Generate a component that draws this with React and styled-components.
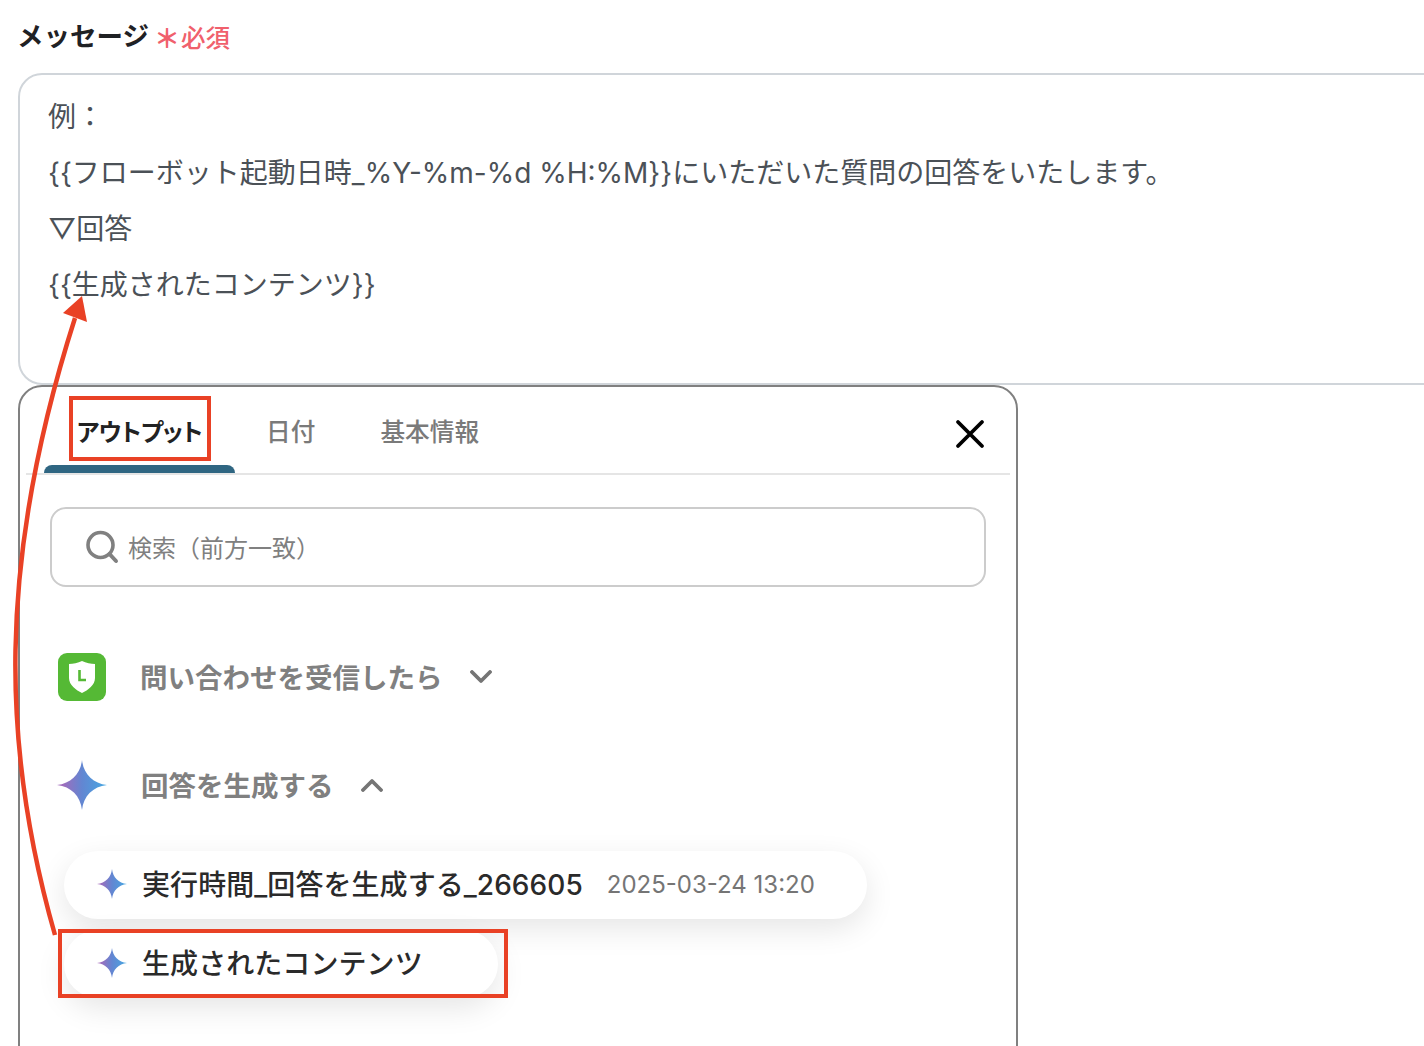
import styled, { createGlobalStyle } from "styled-components";
import { useId } from "react";

const GlobalStyle = createGlobalStyle`
  html, body {
    margin: 0;
    background: #fff;
    overflow: hidden;
  }
  * {
    box-sizing: border-box;
  }
`;

function Sparkle({ size }) {
  const id = useId();
  return (
    <svg width={size} height={size} viewBox="0 0 50 50">
      <defs>
        <linearGradient id={id} x1="0" y1="0" x2="1" y2="0">
          <stop offset="0.1" stopColor="#a26cbb" />
          <stop offset="0.5" stopColor="#6286d2" />
          <stop offset="1" stopColor="#46a8e2" />
        </linearGradient>
      </defs>
      <path
        d="M25 0C26.5 14 36 23.5 50 25C36 26.5 26.5 36 25 50C23.5 36 14 26.5 0 25C14 23.5 23.5 14 25 0Z"
        fill={`url(#${id})`}
      />
    </svg>
  );
}

function LineIcon() {
  return (
    <LineBadge>
      <svg width="28" height="34" viewBox="0 0 28 34">
        <path
          d="M14 1C18 3 23 4 27 4V18C27 25 20 30 14 33C8 30 1 25 1 18V4C5 4 10 3 14 1Z"
          fill="#fff"
        />
        <path d="M11.5 10V20H18" fill="none" stroke="#55b935" strokeWidth="2.6" />
      </svg>
    </LineBadge>
  );
}

function Chevron({ up }) {
  return (
    <ChevronIcon width="22" height="14" viewBox="0 0 22 14">
      <path
        d={up ? "M2 12L11 3L20 12" : "M2 2L11 11L20 2"}
        fill="none"
        stroke="#757575"
        strokeWidth="3.8"
        strokeLinecap="round"
        strokeLinejoin="round"
      />
    </ChevronIcon>
  );
}

export default function App() {
  return (
    <Page>
      <GlobalStyle />
      <LabelRow>
        <Label>メッセージ</Label>
        <Required>
          <RequiredStar>＊</RequiredStar>必須
        </Required>
      </LabelRow>
      <MessageBox>
        <MessageLine>例：</MessageLine>
        <MessageLine>
          {"{{フローボット起動日時_%Y-%m-%d %H:%M}}にいただいた質問の回答をいたします。"}
        </MessageLine>
        <MessageLine>▽回答</MessageLine>
        <MessageLine>{"{{生成されたコンテンツ}}"}</MessageLine>
      </MessageBox>
      <Panel>
        <TabBar>
          <ActiveTab>
            アウトプット
            <TabHighlight />
          </ActiveTab>
          <Tab $left={31}>日付</Tab>
          <Tab $left={65}>基本情報</Tab>
          <CloseButton>
            <svg width="30" height="30" viewBox="0 0 30 30">
              <path
                d="M3 3L27 27M27 3L3 27"
                stroke="#000"
                strokeWidth="3.8"
                strokeLinecap="round"
              />
            </svg>
          </CloseButton>
        </TabBar>
        <SearchBox>
          <svg width="34" height="34" viewBox="0 0 34 34">
            <circle cx="15.5" cy="15" r="12.5" fill="none" stroke="#808080" strokeWidth="3.6" />
            <path d="M24.5 24L31 31" stroke="#808080" strokeWidth="4" strokeLinecap="round" />
          </svg>
          <SearchPlaceholder>検索（前方一致）</SearchPlaceholder>
        </SearchBox>
        <SourceRow>
          <LineIcon />
          <SourceTitle>問い合わせを受信したら</SourceTitle>
          <Chevron />
        </SourceRow>
        <SourceRow $second>
          <Sparkle size={50} />
          <SourceTitle>回答を生成する</SourceTitle>
          <Chevron up />
        </SourceRow>
        <PillList>
          <Pill $w={803}>
            <Sparkle size={30} />
            <PillText>実行時間_回答を生成する_266605</PillText>
            <PillDate>2025-03-24 13:20</PillDate>
          </Pill>
          <Pill $w={434}>
            <Sparkle size={30} />
            <PillText>生成されたコンテンツ</PillText>
            <PillHighlight />
          </Pill>
        </PillList>
      </Panel>
      <ArrowOverlay viewBox="0 0 200 1046" width="200" height="1046">
        <path d="M55 935C2 750 -4 565 75 318" fill="none" stroke="#e94125" strokeWidth="4.5" />
        <path d="M82 296L63 313L87 322Z" fill="#e94125" />
      </ArrowOverlay>
    </Page>
  );
}

const Page = styled.div`
  position: relative;
  width: 1424px;
  height: 1046px;
  overflow: hidden;
  padding: 16px 0 0 18px;
  font-family: "Inter", "Noto Sans CJK JP", sans-serif;
`;

const LabelRow = styled.div`
  display: flex;
  align-items: center;
  gap: 9px;
  height: 40px;
  margin-bottom: 17px;
`;

const Label = styled.span`
  position: relative;
  top: -2px;
  margin-left: -1px;
  font-size: 26.5px;
  font-weight: 700;
  color: #1f2124;
`;

const Required = styled.span`
  display: flex;
  align-items: center;
  font-size: 24.5px;
  font-weight: 500;
  color: #f0606c;
`;

const RequiredStar = styled.span`
  position: relative;
  top: 3px;
  width: 27px;
  margin-left: -4px;
  font-size: 26px;
  font-weight: 700;
  line-height: 1;
`;

const MessageBox = styled.div`
  width: 1500px;
  height: 312px;
  padding: 14px 28px;
  border: 2px solid #d0d5da;
  border-radius: 24px;
`;

const MessageLine = styled.div`
  height: 56px;
  line-height: 56px;
  font-size: 28px;
  color: #4b5157;
  white-space: nowrap;
`;

const Panel = styled.div`
  width: 1000px;
  height: 720px;
  padding: 0 6px;
  border: 2px solid #808080;
  border-radius: 24px;
  background: #fff;
`;

const TabBar = styled.div`
  position: relative;
  display: flex;
  height: 88px;
  padding-left: 18px;
  border-bottom: 2px solid #e5e5e5;
`;

const Tab = styled.div`
  display: flex;
  align-items: center;
  margin-left: ${(p) => p.$left}px;
  font-size: 24.7px;
  font-weight: 500;
  color: #7a7a7a;
`;

const ActiveTab = styled.div`
  position: relative;
  display: flex;
  align-items: center;
  justify-content: center;
  flex: none;
  width: 191px;
  font-size: 24px;
  font-weight: 700;
  letter-spacing: -0.4px;
  font-feature-settings: "palt";
  color: #222;
  &::after {
    content: "";
    position: absolute;
    left: 0;
    right: 0;
    bottom: 0;
    height: 8px;
    border-radius: 8px 8px 0 0;
    background: #2f6682;
  }
`;

const TabHighlight = styled.span`
  position: absolute;
  left: 25px;
  top: 9px;
  width: 142px;
  height: 65px;
  border: 4px solid #e94125;
`;

const CloseButton = styled.div`
  position: absolute;
  right: 25px;
  top: 32px;
  display: flex;
`;

const SearchBox = styled.div`
  display: flex;
  align-items: center;
  gap: 9px;
  width: 936px;
  height: 80px;
  margin: 32px 0 65px 24px;
  padding-left: 33px;
  border: 2px solid #cccccc;
  border-radius: 16px;
`;

const SearchPlaceholder = styled.span`
  margin-bottom: 2px;
  font-size: 24px;
  color: #808080;
`;

const SourceRow = styled.div`
  display: flex;
  align-items: center;
  height: 50px;
  margin: ${(p) => (p.$second ? "58px" : "0")} 0 0 31px;
  > svg:first-child {
    flex: none;
  }
`;

const ChevronIcon = styled.svg`
  margin-left: 27px;
`;

const LineBadge = styled.div`
  display: flex;
  align-items: center;
  justify-content: center;
  flex: none;
  width: 48px;
  height: 48px;
  margin-left: 1px;
  border-radius: 9px;
  background: #55b935;
`;

const SourceTitle = styled.span`
  position: relative;
  top: -1px;
  margin-left: 34px;
  font-size: 27.5px;
  font-weight: 700;
  color: #808080;
`;

const PillList = styled.div`
  display: flex;
  flex-direction: column;
  gap: 11px;
  margin: 41px 0 0 38px;
`;

const Pill = styled.div`
  position: relative;
  display: flex;
  align-items: center;
  width: ${(p) => p.$w}px;
  height: 68px;
  padding: 0 0 2px 33px;
  border-radius: 34px;
  background: #fff;
  box-shadow: 0 10px 30px rgba(0, 0, 0, 0.1);
`;

const PillText = styled.span`
  margin: 0 0 2px 15px;
  font-size: 28px;
  font-weight: 500;
  letter-spacing: 0.07px;
  color: #2a2a2a;
  white-space: nowrap;
`;

const PillDate = styled.span`
  margin-left: 24px;
  font-size: 24px;
  color: #757575;
  white-space: nowrap;
`;

const PillHighlight = styled.span`
  position: absolute;
  left: -6px;
  top: -1px;
  width: 450px;
  height: 69px;
  border: 4px solid #e94125;
`;

const ArrowOverlay = styled.svg`
  position: absolute;
  left: 0;
  top: 0;
  pointer-events: none;
`;
